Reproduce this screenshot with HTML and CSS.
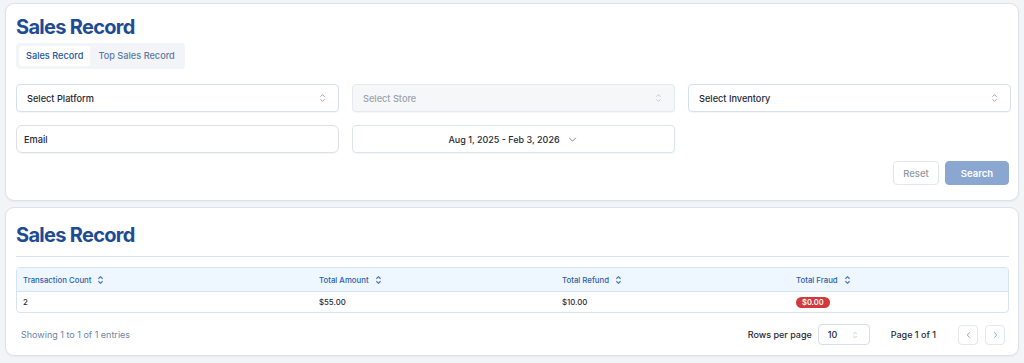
FILE: index.html
```html
<!DOCTYPE html>
<html>
<head>
<meta charset="utf-8">
<link rel="stylesheet" href="styles.css">
</head>
<body>
<div class="page">
  <section class="card filters">
    <h1 class="title">Sales Record</h1>
    <div class="tabs">
      <span class="tab active">Sales Record</span>
      <span class="tab">Top Sales Record</span>
    </div>
    <div class="grid">
      <div class="field">Select Platform<svg class="updown" viewBox="0 0 8 12"><path d="M1.5 4.5 4 2l2.5 2.5M1.5 7.5 4 10l2.5-2.5"/></svg></div>
      <div class="field disabled">Select Store<svg class="updown" viewBox="0 0 8 12"><path d="M1.5 4.5 4 2l2.5 2.5M1.5 7.5 4 10l2.5-2.5"/></svg></div>
      <div class="field">Select Inventory<svg class="updown" viewBox="0 0 8 12"><path d="M1.5 4.5 4 2l2.5 2.5M1.5 7.5 4 10l2.5-2.5"/></svg></div>
      <div class="field input">Email</div>
      <div class="field date">Aug 1, 2025 - Feb 3, 2026<svg class="chev" viewBox="0 0 10 6"><path d="M1 1l4 4 4-4"/></svg></div>
    </div>
    <div class="actions">
      <button class="btn reset">Reset</button>
      <button class="btn search">Search</button>
    </div>
  </section>
  <section class="card results">
    <h1 class="title">Sales Record</h1>
    <hr class="rule">
    <div class="table">
      <div class="row head">
        <div class="c c1">Transaction Count<svg class="sort" viewBox="0 0 8 12"><path d="M1.5 4.5 4 2l2.5 2.5M1.5 7.5 4 10l2.5-2.5"/></svg></div>
        <div class="c c2">Total Amount<svg class="sort" viewBox="0 0 8 12"><path d="M1.5 4.5 4 2l2.5 2.5M1.5 7.5 4 10l2.5-2.5"/></svg></div>
        <div class="c c3">Total Refund<svg class="sort" viewBox="0 0 8 12"><path d="M1.5 4.5 4 2l2.5 2.5M1.5 7.5 4 10l2.5-2.5"/></svg></div>
        <div class="c c4">Total Fraud<svg class="sort" viewBox="0 0 8 12"><path d="M1.5 4.5 4 2l2.5 2.5M1.5 7.5 4 10l2.5-2.5"/></svg></div>
      </div>
      <div class="row body">
        <div class="c c1">2</div>
        <div class="c c2">$55.00</div>
        <div class="c c3">$10.00</div>
        <div class="c c4"><span class="badge">$0.00</span></div>
      </div>
    </div>
    <div class="footer">
      <span class="showing">Showing 1 to 1 of 1 entries</span>
      <div class="pager">
        <span class="rpp">Rows per page</span>
        <div class="rows-select">10<svg class="updown small" viewBox="0 0 8 12"><path d="M1.5 4.5 4 2l2.5 2.5M1.5 7.5 4 10l2.5-2.5"/></svg></div>
        <span class="pageinfo">Page 1 of 1</span>
        <div class="navs">
          <span class="nav"><svg viewBox="0 0 6 10"><path d="M4.5 1.5 1.5 5l3 3.5"/></svg></span>
          <span class="nav"><svg viewBox="0 0 6 10"><path d="M1.5 1.5 4.5 5l-3 3.5"/></svg></span>
        </div>
      </div>
    </div>
  </section>
</div>
</body>
</html>
```

FILE: styles.css
```css
* { box-sizing: border-box; }
html, body { margin: 0; padding: 0; }
body {
  background: #f3f4f6;
  font-family: Inter, "Liberation Sans", sans-serif;
  color: #1f2937;
  width: 1024px;
  height: 363px;
  overflow: hidden;
}
.page {
  padding: 3px 5px 0 5px;
  display: flex;
  flex-direction: column;
  gap: 6px;
}
.card {
  background: #fff;
  border: 1px solid #d9e2ee;
  border-radius: 9px;
  box-shadow: 0 1px 2px rgba(30, 60, 110, 0.06);
  padding: 0 9px 0 10px;
}
.filters { height: 198px; padding-top: 11px; }
.results { height: 149px; padding-top: 15px; }
.title {
  margin: 0;
  font-size: 20px;
  line-height: 24px;
  font-weight: 700;
  color: #1d4b94;
  letter-spacing: -0.7px;
}
.tabs {
  margin-top: 4px;
  display: inline-flex;
  background: #f2f4f7;
  border-radius: 4px;
  padding: 3px;
  gap: 1px;
}
.tab {
  font-size: 9.2px;
  font-weight: 500;
  line-height: 20px;
  padding: 0 7px;
  color: #5a79a6;
  border-radius: 3px;
}
.tab.active { background: #fff; color: #24559e; }
.grid {
  margin-top: 15px;
  display: grid;
  grid-template-columns: 323px 323px 323px;
  column-gap: 13px;
  row-gap: 13px;
}
.field {
  height: 28px;
  border: 1px solid #d5e0ee;
  border-radius: 4px;
  display: flex;
  align-items: center;
  justify-content: space-between;
  padding: 0 12px 0 10px;
  font-size: 9.2px;
  font-weight: 500;
  color: #1f2937;
  box-shadow: 0 1px 1px rgba(30, 60, 110, 0.05);
}
.field.disabled { background: #f6f7f9; color: #9aa2ae; border-color: #e6eaf0; }
.field.input { border-color: #dcdfe4; border-radius: 6px; padding-left: 7px; }
.field.date { justify-content: center; gap: 8px; border-color: #dce3ec; font-size: 9px; }
.updown { width: 7px; height: 10px; fill: none; stroke: #8a94a3; stroke-width: 1; }
.field.disabled .updown { stroke: #b9c0ca; }
.chev { width: 9px; height: 5px; fill: none; stroke: #6b7280; stroke-width: 1; }
.actions {
  margin-top: 8px;
  display: flex;
  justify-content: flex-end;
  gap: 6px;
}
.btn {
  font-family: inherit;
  font-size: 9.5px;
  font-weight: 500;
  height: 24px;
  border-radius: 4px;
  border: 1px solid #e3e6ea;
  background: #fff;
  color: #8f96a0;
  padding: 0;
}
.btn.reset { width: 46px; }
.btn.search { width: 64px; background: #8aa7d2; border-color: #8aa7d2; color: #fff; font-weight: 600; }
.rule { border: 0; border-top: 1px solid #d6e2ef; margin: 9px 0 10px 0; }
.table {
  border: 1px solid #d6e4f1;
  border-radius: 4px;
  overflow: hidden;
}
.row { display: flex; }
.row.head { background: #eef6ff; height: 24px; border-bottom: 1px solid #d6e4f1; }
.row.body { height: 20px; }
.c {
  display: flex;
  align-items: center;
  font-size: 7.8px;
  font-weight: 500;
  padding-left: 6px;
  gap: 6px;
}
.head .c { color: #2c5fa8; }
.body .c { color: #1f2937; }
.c1 { width: 296px; }
.c2 { width: 243px; }
.c3 { width: 234px; }
.c4 { flex: 1; }
.sort { width: 7px; height: 10px; fill: none; stroke: #3d6db3; stroke-width: 1.3; }
.badge {
  background: #d3383b;
  color: #fff;
  border-radius: 7px;
  padding: 0 6px;
  line-height: 11px;
  font-size: 7.5px;
  font-weight: 600;
}
.footer {
  margin-top: 11px;
  display: flex;
  align-items: center;
  justify-content: space-between;
  padding-left: 5px;
}
.showing { font-size: 9px; color: #6c85a6; }
.pager { display: flex; align-items: center; }
.rpp { font-size: 9px; font-weight: 500; color: #1f2937; }
.rows-select {
  margin-left: 6px;
  width: 52px;
  height: 21px;
  border: 1px solid #d6e0ec;
  border-radius: 4px;
  display: flex;
  align-items: center;
  justify-content: space-between;
  padding: 0 11px 0 9px;
  font-size: 9px;
  font-weight: 500;
}
.updown.small { width: 6px; height: 8px; stroke: #a5adb8; }
.pageinfo { margin-left: 21px; font-size: 9px; font-weight: 500; }
.navs { margin-left: 22px; display: flex; gap: 7px; margin-right: 4px; }
.nav {
  width: 20px;
  height: 20px;
  border: 1px solid #e3e8ee;
  border-radius: 4px;
  display: flex;
  align-items: center;
  justify-content: center;
}
.nav svg { width: 5px; height: 8px; fill: none; stroke: #8a94a3; stroke-width: 1; }
```
